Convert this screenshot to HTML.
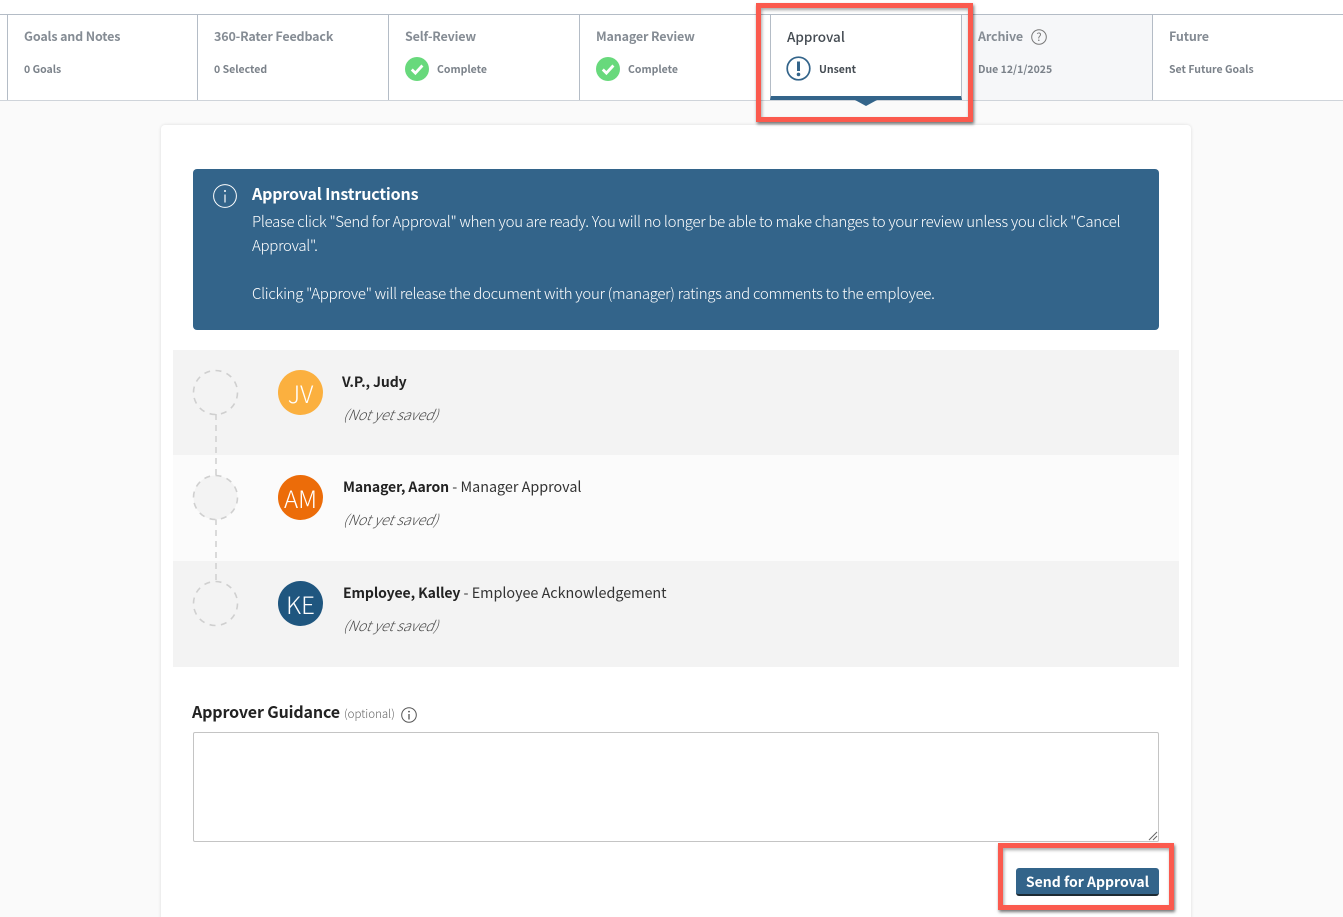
<!DOCTYPE html>
<html lang="en">
<head>
<meta charset="utf-8">
<title>Approval</title>
<style>
html,body{margin:0;padding:0;width:1343px;height:917px;overflow:hidden;background:#fafafa}
body{position:relative;font-family:"Noto Sans CJK JP","Liberation Sans",sans-serif;color:#222}
.a{position:absolute;white-space:nowrap}
.t{font-size:12.5px;line-height:18px;font-weight:700;color:#858c94;letter-spacing:-.15px}
.s{font-size:10.5px;line-height:14px;font-weight:700;color:#7b828a;letter-spacing:0}
.v{position:absolute;top:14px;width:1px;height:86px;background:#b4bcc6}
.red{position:absolute;border:5px solid #fb5a4e;box-shadow:1px 2px 3px rgba(0,0,0,.55),inset 1px 2px 3px rgba(0,0,0,.35);box-sizing:border-box}
.row{position:absolute;left:173px;width:1006px}
.av{position:absolute;left:278px;width:45px;height:45px;border-radius:50%;color:#fff;font-size:24px;line-height:45px;text-align:center;font-weight:300}
.n{font-size:14.35px;line-height:20px;color:#333;font-weight:400}
.n b{font-weight:700;color:#222;font-size:14px;letter-spacing:-.1px}
.ns{font-size:14.15px;line-height:20px;font-style:italic;font-weight:300;color:#4a4a4a;transform:skewX(-10deg);transform-origin:left bottom}
</style>
</head>
<body>
<div class="a" style="left:0;top:0;width:1343px;height:14px;background:#fff"></div>
<div class="a" style="left:0;top:14px;width:1343px;height:87px;background:#fff;box-sizing:border-box;border-top:1px solid #b4bcc6;border-bottom:1px solid #cfd4da"></div>
<div class="a" style="left:962px;top:15px;width:190px;height:85px;background:#f6f7f9"></div>
<div class="v" style="left:7px"></div>
<div class="v" style="left:197px"></div>
<div class="v" style="left:388px"></div>
<div class="v" style="left:579px"></div>
<div class="v" style="left:1152px"></div>

<div class="a t" style="left:24px;top:27px">Goals and Notes</div>
<div class="a s" style="left:24px;top:63px">0 Goals</div>
<div class="a t" style="left:214px;top:27px">360-Rater Feedback</div>
<div class="a s" style="left:214px;top:63px">0 Selected</div>
<div class="a t" style="left:405px;top:27px">Self-Review</div>
<svg class="a" style="left:405px;top:57px" width="24" height="24" viewBox="0 0 24 24"><circle cx="12" cy="12" r="12" fill="#68d97c"/><path d="M6.8 12.5l3.6 3.6 7-7.6" fill="none" stroke="#fff" stroke-width="2.8"/></svg>
<div class="a s" style="left:437px;top:63px">Complete</div>
<div class="a t" style="left:596px;top:27px">Manager Review</div>
<svg class="a" style="left:596px;top:57px" width="24" height="24" viewBox="0 0 24 24"><circle cx="12" cy="12" r="12" fill="#68d97c"/><path d="M6.8 12.5l3.6 3.6 7-7.6" fill="none" stroke="#fff" stroke-width="2.8"/></svg>
<div class="a s" style="left:628px;top:63px">Complete</div>

<div class="a" style="left:770px;top:15px;width:192px;height:85px;background:#fff;box-sizing:border-box;border-left:1px solid #b4bcc6;border-right:1px solid #b4bcc6;border-bottom:4px solid #33648a"></div>
<div class="a" style="left:855px;top:100px;width:0;height:0;border-left:11px solid transparent;border-right:11px solid transparent;border-top:6px solid #33648a"></div>
<div class="a t" style="left:787px;top:27px;color:#444b52;font-size:13.5px;font-weight:500;letter-spacing:0">Approval</div>
<svg class="a" style="left:786px;top:56px" width="25" height="25" viewBox="0 0 25 25"><circle cx="12.5" cy="12.5" r="11.3" fill="none" stroke="#33648a" stroke-width="1.7"/><path d="M12.5 5.5v9.5" stroke="#33648a" stroke-width="3"/><circle cx="12.5" cy="18.4" r="1.8" fill="#33648a"/></svg>
<div class="a s" style="left:819px;top:63px;color:#444b52">Unsent</div>

<div class="a t" style="left:978px;top:27px">Archive</div>
<svg class="a" style="left:1031px;top:29px" width="16" height="16" viewBox="0 0 16 16"><circle cx="8" cy="8" r="7.3" fill="none" stroke="#777" stroke-width="1"/><text x="8" y="12" font-size="11" text-anchor="middle" fill="#777" font-family="Noto Sans CJK JP,sans-serif">?</text></svg>
<div class="a s" style="left:978px;top:63px">Due 12/1/2025</div>
<div class="a t" style="left:1169px;top:27px">Future</div>
<div class="a s" style="left:1169px;top:63px">Set Future Goals</div>

<div class="a" style="left:161px;top:125px;width:1030px;height:800px;background:#fff;border-radius:4px;box-shadow:0 0 3px rgba(0,0,0,.12)"></div>

<div class="a" style="left:193px;top:169px;width:966px;height:161px;background:#33648a;border-radius:4px"></div>
<svg class="a" style="left:213px;top:184px" width="24" height="24" viewBox="0 0 24 24"><circle cx="12" cy="12" r="11.4" fill="none" stroke="#fff" stroke-width="1"/><path d="M12 10.5v8" stroke="#fff" stroke-width="1.2"/><circle cx="12" cy="7" r="1" fill="#fff"/></svg>
<div class="a" style="left:252px;top:182px;font-size:16px;line-height:22px;font-weight:700;color:#fff;letter-spacing:-.15px">Approval Instructions</div>
<div class="a" style="left:252px;top:210px;font-size:15px;line-height:24px;font-weight:300;color:#fff;letter-spacing:-.295px">Please click "Send for Approval" when you are ready. You will no longer be able to make changes to your review unless you click "Cancel<br>Approval".<br><br>Clicking "Approve" will release the document with your (manager) ratings and comments to the employee.</div>

<div class="row" style="top:350px;height:105px;background:#f3f3f3"></div>
<div class="row" style="top:455px;height:106px;background:#fbfbfb"></div>
<div class="row" style="top:561px;height:106px;background:#f3f3f3"></div>

<svg class="a" style="left:185px;top:360px" width="60" height="275" viewBox="0 0 60 275">
<path d="M31 54V115M31 159V221" stroke="#cfcfcf" stroke-width="1.5" stroke-dasharray="6 5" fill="none"/>
<circle cx="30.5" cy="32.5" r="22" fill="none" stroke="#cfcfcf" stroke-width="1.6" stroke-dasharray="6 5.5"/>
<circle cx="30.5" cy="137.5" r="22" fill="#f3f3f3" stroke="#cfcfcf" stroke-width="1.6" stroke-dasharray="6 5.5"/>
<circle cx="30.5" cy="243.5" r="22" fill="none" stroke="#cfcfcf" stroke-width="1.6" stroke-dasharray="6 5.5"/>
</svg>

<div class="av" style="top:370px;background:#fbb03f">JV</div>
<div class="av" style="top:475px;background:#ec6c09">AM</div>
<div class="av" style="top:581px;background:#1f567f">KE</div>

<div class="a n" style="left:342px;top:372px"><b>V.P., Judy</b></div>
<div class="a ns" style="left:342px;top:405px">(Not yet saved)</div>
<div class="a n" style="left:343px;top:477px"><b>Manager, Aaron</b> - Manager Approval</div>
<div class="a ns" style="left:342px;top:510px">(Not yet saved)</div>
<div class="a n" style="left:343px;top:583px"><b>Employee, Kalley</b> - Employee Acknowledgement</div>
<div class="a ns" style="left:342px;top:616px">(Not yet saved)</div>

<div class="a" style="left:192px;top:700px;font-size:16px;line-height:22px;font-weight:700;color:#222;letter-spacing:-.14px">Approver Guidance</div>
<div class="a" style="left:344px;top:705px;font-size:11.5px;line-height:18px;font-weight:300;color:#666">(optional)</div>
<svg class="a" style="left:401px;top:707px" width="16" height="16" viewBox="0 0 16 16"><circle cx="8" cy="8" r="7.3" fill="none" stroke="#555" stroke-width="1"/><path d="M8 7v5.5" stroke="#555" stroke-width="1.3"/><circle cx="8" cy="4.6" r=".9" fill="#555"/></svg>

<div class="a" style="left:193px;top:732px;width:966px;height:110px;box-sizing:border-box;background:#fff;border:1px solid #c4c4c4;border-radius:2px"></div>
<svg class="a" style="left:1148px;top:831px" width="10" height="10" viewBox="0 0 10 10"><path d="M1 9L9 1M5 9L9 5" stroke="#666" stroke-width="1"/></svg>

<div class="a" style="left:1016px;top:868px;width:143px;height:28px;box-sizing:border-box;background:#33648a;border-bottom:2px solid #1d2a33;border-radius:3px;color:#fff;font-size:14px;line-height:29px;font-weight:700;text-align:center">Send for Approval</div>

<div class="red" style="left:756px;top:3px;width:217px;height:119px"></div>
<div class="red" style="left:998px;top:843px;width:176px;height:67px"></div>
</body>
</html>
